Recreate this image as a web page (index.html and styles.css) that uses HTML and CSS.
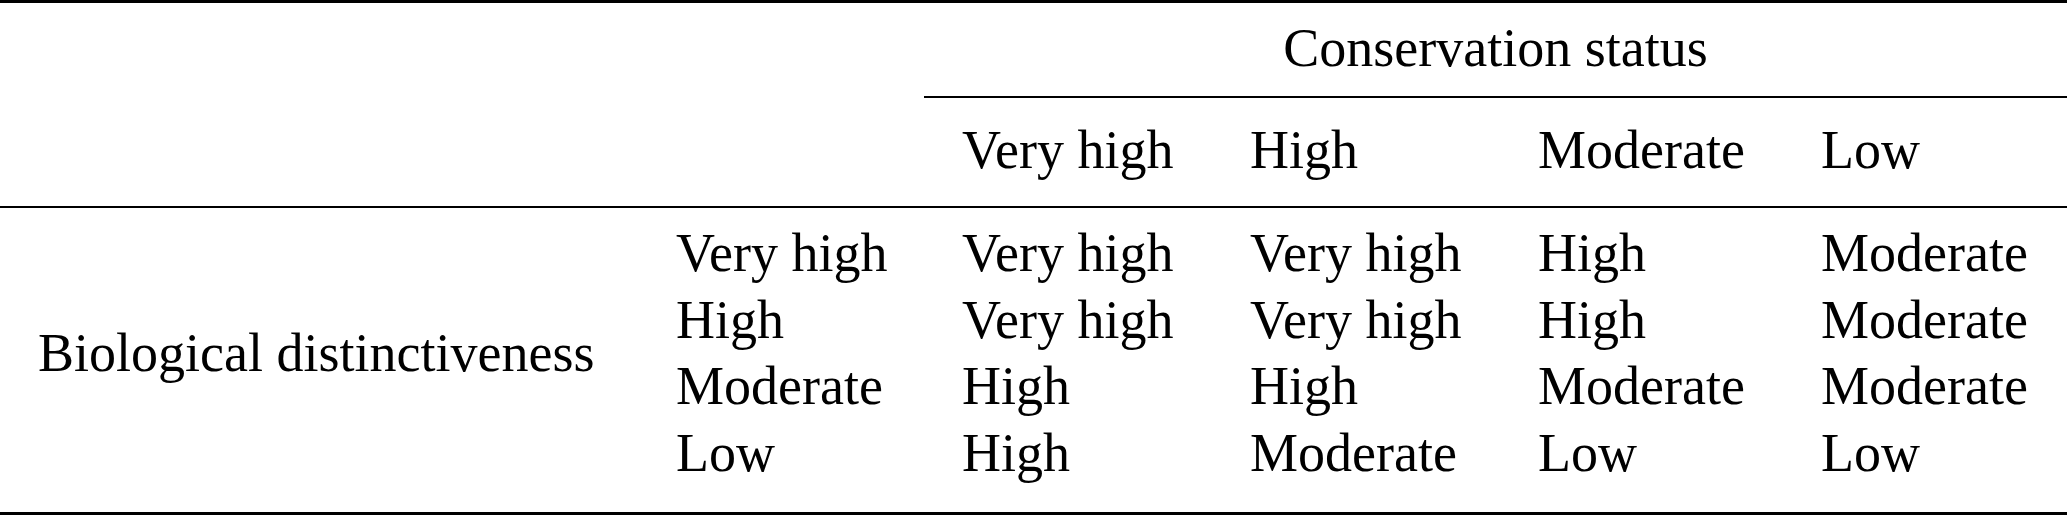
FILE: index.html
```html
<!DOCTYPE html>
<html lang="en">
<head>
  <meta charset="UTF-8">
  <title>Conservation priority</title>
  <link rel="stylesheet" href="styles.css">
</head>
<body>

<div class="table">
  <div class="head">
    <div class="cell"></div>
    <div class="cell"></div>
    <div class="group">Conservation status</div>

    <div class="cell sub"></div>
    <div class="cell sub"></div>
    <div class="cell sub">Very high</div>
    <div class="cell sub">High</div>
    <div class="cell sub">Moderate</div>
    <div class="cell sub">Low</div>
  </div>

  <div class="body">
    <div class="cell label">Biological distinctiveness</div>

    <div class="cell">Very high</div>
    <div class="cell">Very high</div>
    <div class="cell">Very high</div>
    <div class="cell">High</div>
    <div class="cell">Moderate</div>

    <div class="cell">High</div>
    <div class="cell">Very high</div>
    <div class="cell">Very high</div>
    <div class="cell">High</div>
    <div class="cell">Moderate</div>

    <div class="cell">Moderate</div>
    <div class="cell">High</div>
    <div class="cell">High</div>
    <div class="cell">Moderate</div>
    <div class="cell">Moderate</div>

    <div class="cell">Low</div>
    <div class="cell">High</div>
    <div class="cell">Moderate</div>
    <div class="cell">Low</div>
    <div class="cell">Low</div>
  </div>
</div>

</body>
</html>
```

FILE: styles.css
```css
html, body {
  margin: 0;
  padding: 0;
  background-color: white;
  overflow: hidden;
}

.table {
  width: 2067px;
  font-family: "Liberation Serif", "Times New Roman", serif;
  font-size: 54px;
  line-height: 66px;
  color: black;
  border-top: 3px solid black;
  border-bottom: 3px solid black;
}

.head,
.body {
  display: grid;
  grid-template-columns: 638px 286px 288px 288px 283px 1fr;
}

.head {
  border-bottom: 2px solid black;
}

.cell {
  padding-left: 38px;
  white-space: nowrap;
}

/* spanning header with the short rule under it */
.group {
  grid-column: 3 / span 4;
  text-align: center;
  padding: 12px 0 15px;
  border-bottom: 2px solid black;
}

.sub {
  padding-top: 19px;
  padding-bottom: 23px;
}

.body {
  padding: 12px 0 25px;
  line-height: 66.67px;
}

.label {
  grid-row: 1 / span 4;
  align-self: center;
}
```
